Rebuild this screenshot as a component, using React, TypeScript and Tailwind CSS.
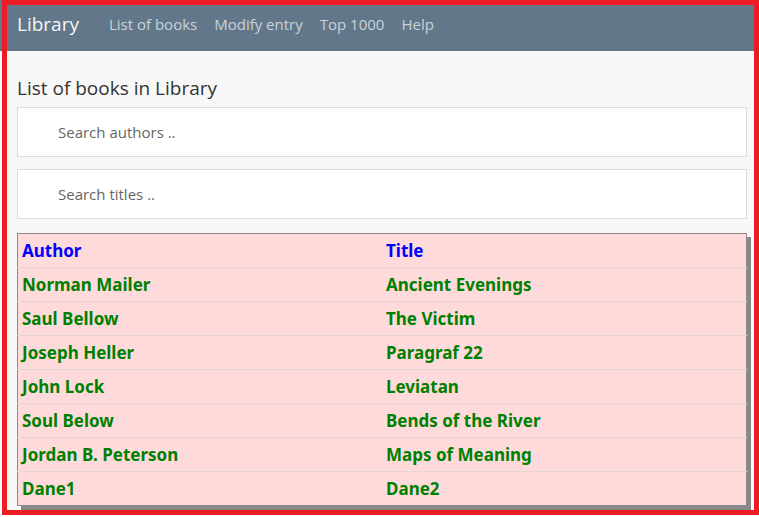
import React from "react";

const books = [
  { author: "Norman Mailer", title: "Ancient Evenings" },
  { author: "Saul Bellow", title: "The Victim" },
  { author: "Joseph Heller", title: "Paragraf 22" },
  { author: "John Lock", title: "Leviatan" },
  { author: "Soul Below", title: "Bends of the River" },
  { author: "Jordan B. Peterson", title: "Maps of Meaning" },
  { author: "Dane1", title: "Dane2" },
];

const links = ["List of books", "Modify entry", "Top 1000", "Help"];

export default function App() {
  return (
    <div className="relative h-[517px] w-[759px] overflow-hidden bg-white font-['Open_Sans',sans-serif]">
      <div className="h-[515px] w-[754px] bg-[#f8f8f8]">
        {/* navbar */}
        <nav className="flex h-[51px] items-center bg-[#62788a] pb-[3px] pl-[17px]">
          <span className="mr-[30px] text-[19px] text-[#f4f6f8]">Library</span>
          <div className="flex gap-[17px] text-[15px] text-[#c9d2da]">
            {links.map((l) => (
              <span key={l}>{l}</span>
            ))}
          </div>
        </nav>

        <div className="px-[17px] pr-[7px]">
          <h2 className="pt-[23px] pb-[5px] text-[19px] leading-[28px] text-[#333]">List of books in Library</h2>

          <input
            className="block h-[50px] w-full border border-[#dcdcdc] bg-white pl-[40px] text-[15px] text-[#555] placeholder:text-[#666] outline-none"
            placeholder="Search authors .."
          />
          <input
            className="mt-[12px] block h-[50px] w-full border border-[#dcdcdc] bg-white pl-[40px] text-[15px] text-[#555] placeholder:text-[#666] outline-none"
            placeholder="Search titles .."
          />

          <table className="mt-[14px] w-full table-fixed border-collapse border border-[#8a8a8a] bg-[#ffdadb] font-['Noto_Sans',sans-serif] text-[17px] font-bold shadow-[4px_4px_0_0_#888]">
            <thead>
              <tr className="h-[34px] border-b border-[#e6d6d6] text-left text-[#0000ff]">
                <th className="px-[4px] font-bold">Author</th>
                <th className="px-[4px] font-bold">Title</th>
              </tr>
            </thead>
            <tbody>
              {books.map((b, i) => (
                <tr key={i} className="h-[34px] border-b border-[#e6d6d6] text-[#008000] last:border-b-0">
                  <td className="px-[4px]">{b.author}</td>
                  <td className="px-[4px]">{b.title}</td>
                </tr>
              ))}
            </tbody>
          </table>
        </div>
      </div>
      {/* red frame drawn over the page */}
      <div className="pointer-events-none absolute left-[2px] top-0 h-[515px] w-[757px] border-[5px] border-[#ed1c24]" />
    </div>
  );
}
